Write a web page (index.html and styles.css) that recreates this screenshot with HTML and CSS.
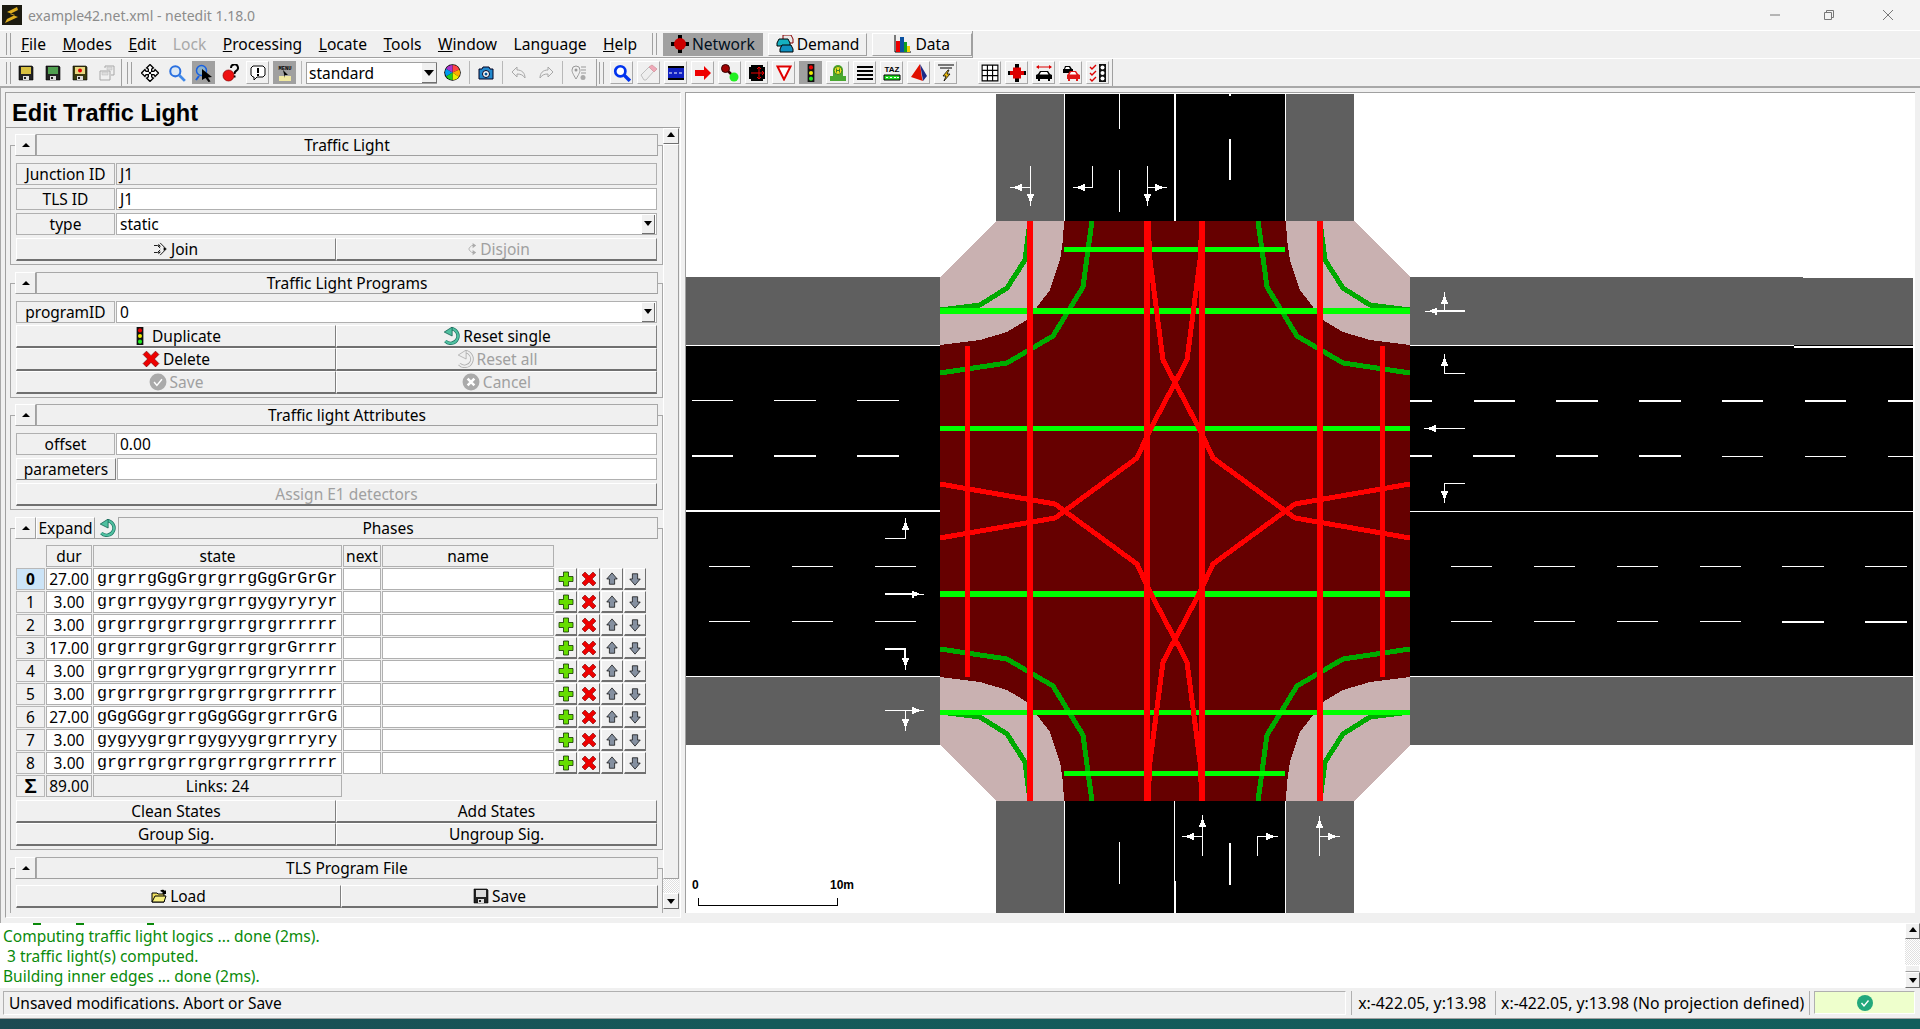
FILE: index.html
```html
<!DOCTYPE html>
<html lang="en">
<head>
<meta charset="utf-8">
<title>example42.net.xml - netedit 1.18.0</title>
<link rel="stylesheet" href="styles.css">
</head>
<body>
<svg class="defs" width="0" height="0">
  <defs>
    <symbol id="floppy" viewBox="0 0 16 16"><path d="M1 1h13l1 1v13H1z" fill="#222" stroke="#000" stroke-width=".6"/><path d="M3 2h10v7H3z" fill="currentColor"/><path d="M5 11h6v4H5z" fill="#ddd"/><path d="M6 12h2v2H6z" fill="#222"/></symbol>
    <symbol id="floppy-red" viewBox="0 0 16 16"><path d="M1 1h13l1 1v13H1z" fill="#3a3a10" stroke="#000" stroke-width=".6"/><path d="M3 2h10v7H3z" fill="#e8d880"/><circle cx="8" cy="5.500" r="2" fill="#e00000"/><path d="M5 11h6v4H5z" fill="#ddd"/><path d="M6 12h2v2H6z" fill="#222"/></symbol>
    <symbol id="floppy-off" viewBox="0 0 16 16"><path d="M6 3V1h9v9h-3M1 6h10v9H1z" fill="none" stroke="#a8a8a8"/><path d="M3 7h6v3H3zM8 2h5v3H8z" fill="#ddd" stroke="#bbb" stroke-width=".5"/></symbol>
    <symbol id="i-cross" viewBox="0 0 16 16"><path d="M8 .5l3 3-1.500 1v2h2l1-1.500 3 3-3 3-1-1.500h-2v2l1.500 1-3 3-3-3 1.500-1v-2h-2l-1 1.500-3-3 3-3 1 1.500h2v-2L5 3.500z" fill="#fff" stroke="#000" stroke-width="1.200"/><path d="M7 7h2v2H7z" fill="#000"/></symbol>
    <symbol id="i-lens" viewBox="0 0 16 16"><circle cx="6.500" cy="6.500" r="4.500" fill="#dce8f4" stroke="#2a70e0" stroke-width="1.800"/><path d="M10 10l5 5" stroke="#4088e8" stroke-width="2.500"/></symbol>
    <symbol id="i-lens-dark" viewBox="0 0 16 16"><circle cx="6.500" cy="6.500" r="4.500" fill="#fff" stroke="#0033ee" stroke-width="2.400"/><path d="M10 10l5 5" stroke="#0033ee" stroke-width="3"/></symbol>
    <symbol id="i-inspect" viewBox="0 0 18 18"><circle cx="6.500" cy="6.500" r="5" fill="#8db0c8" stroke="#1860e0" stroke-width="1.500"/><path d="M1 16l3-4" stroke="#1860e0" stroke-width="2"/><path d="M7 5l10 8-4 .5 2.500 4-2 .5-3-4-3.500 2z" fill="#000"/></symbol>
    <symbol id="i-delete-sel" viewBox="0 0 18 18"><path d="M9 4a3.500 3.500 0 1 1 5 3c-1 .5-1.500 1-1.500 3" fill="none" stroke="#000" stroke-width="2"/><path d="M11.500 11.500h2v2h-2z" fill="#000"/><circle cx="6.500" cy="11.500" r="5.500" fill="#ee1010" stroke="#800" stroke-width=".7"/></symbol>
    <symbol id="i-bubble" viewBox="0 0 16 16"><path d="M3 1h10l2 2v7l-2 2H7l-3 3v-3H3l-2-2V3z" fill="#fff" stroke="#000"/><path d="M7 3h2v5H7zM7 9h2v2H7z" fill="#000"/></symbol>
    <symbol id="i-wheel" viewBox="0 0 16 16"><circle cx="8" cy="8" r="7.800" fill="#000"/><path d="M8 8L8 1A7 7 0 0 1 14.400 5.200z" fill="#f44"/><path d="M8 8L14.400 5.200A7 7 0 0 1 14 12z" fill="#fa0"/><path d="M8 8L14 12A7 7 0 0 1 8 15z" fill="#ee0"/><path d="M8 8L8 15A7 7 0 0 1 2 11.500z" fill="#2c2"/><path d="M8 8L2 11.500A7 7 0 0 1 2 4.500z" fill="#09e"/><path d="M8 8L2 4.500A7 7 0 0 1 8 1z" fill="#a3c"/></symbol>
    <symbol id="i-camera" viewBox="0 0 16 16"><path d="M1 4h3l1-2h6l1 2h3v10H1z" fill="#2288cc" stroke="#002"/><circle cx="8" cy="9" r="3.500" fill="#fff" stroke="#002"/><circle cx="8" cy="9" r="1.500" fill="#059"/></symbol>
    <symbol id="i-undo" viewBox="0 0 16 16"><path d="M1 7l5-5v3c5 0 8 3 8 8-2-3-4-4-8-4v3z" fill="none" stroke="#a8a8a8"/></symbol>
    <symbol id="i-redo" viewBox="0 0 16 16"><path d="M15 7l-5-5v3c-5 0-8 3-8 8 2-3 4-4 8-4v3z" fill="none" stroke="#a8a8a8"/></symbol>
    <symbol id="i-config" viewBox="0 0 16 16"><path d="M5 14C2 9 1 7 1 5a4 4 0 0 1 8 0c0 2-1 4-4 9z" fill="none" stroke="#999"/><circle cx="5" cy="5" r="1.500" fill="#999"/><path d="M10 2h5M10 5h5M10 8h5" stroke="#999"/><circle cx="12" cy="12.500" r="2.500" fill="#aaa"/></symbol>
    <symbol id="i-eraser" viewBox="0 0 18 18"><path d="M1 11l8-8 5 4-8 9H4z" fill="#eee" stroke="#c0c0c0"/><path d="M9 3l3-2 5 4-3 3z" fill="#f0a8b8" stroke="#d8a0a8"/></symbol>
    <symbol id="i-lane" viewBox="0 0 16 16"><path d="M0 1h16v14H0z" fill="#000"/><path d="M0 3h16v10H0z" fill="#1020c0"/><path d="M1 8h3M6 8h3M11 8h3" stroke="#fff"/></symbol>
    <symbol id="i-arrow" viewBox="0 0 16 16"><path d="M0 5h9V1l7 7-7 7v-4H0z" fill="#ee0000"/></symbol>
    <symbol id="i-conn" viewBox="0 0 18 18"><path d="M4 4l9 9" stroke="#300" stroke-width="2.500"/><circle cx="4.500" cy="4.500" r="4" fill="#a00000" stroke="#300"/><circle cx="13" cy="13" r="4.500" fill="#22f022"/></symbol>
    <symbol id="i-crossing" viewBox="0 0 18 18"><path d="M1 1h16v16H1z" fill="#000"/><path d="M3 9h13M11 3v12M11 3l-2 2M11 3l2 2M16 9l-2-2M16 9l-2 2M11 15l-2-2M11 15l2-2" stroke="#ee0000" fill="none"/><path d="M1 1h2v2H1zM15 15h2v2h-2zM1 15h2v2H1zM15 1h2v2h-2z" fill="#eee"/></symbol>
    <symbol id="i-yield" viewBox="0 0 16 16"><path d="M1.500 1.500h13L8 14.500z" fill="#fff" stroke="#e00000" stroke-width="2"/></symbol>
    <symbol id="i-tl" viewBox="0 0 16 16"><path d="M5 0h6v16H5z" fill="#111"/><circle cx="8" cy="3" r="1.800" fill="#e00"/><circle cx="8" cy="8" r="1.800" fill="#ee0"/><circle cx="8" cy="13" r="1.800" fill="#2e2"/></symbol>
    <symbol id="i-stop" viewBox="0 0 18 18"><path d="M1 12h16v5H1z" fill="#49a830"/><path d="M4 12V6a5 5 0 0 1 10 0v6z" fill="#49a830"/><circle cx="9" cy="6.500" r="4" fill="#e8e020" stroke="#3a8020"/><path d="M7.500 4.500v4M10.500 4.500v4M7.500 6.500h3" stroke="#3a8020"/></symbol>
    <symbol id="i-lines" viewBox="0 0 16 16"><path d="M0 1h16v2H0zM0 5h16v2H0zM0 9h16v2H0zM0 13h16v2H0z" fill="#000"/></symbol>
    <symbol id="i-poly" viewBox="0 0 18 18"><path d="M10 0l2 14 1 3L1 13z" fill="#e01000"/><path d="M10 0l7 12-4 5z" fill="#1a2a88"/></symbol>
    <symbol id="i-bolt" viewBox="0 0 18 18"><path d="M1 1h16M3 4h12" stroke="#000"/><path d="M11 6L6 12h3l-2 5 6-7h-3l2-4z" fill="#f0c010" stroke="#000" stroke-width=".8"/></symbol>
    <symbol id="i-grid" viewBox="0 0 16 16"><path d="M1 1h14v14H1zM5.700 1v14M10.300 1v14M1 5.700h14M1 10.300h14" fill="#fff" stroke="#000"/></symbol>
    <symbol id="i-redcross" viewBox="0 0 18 18"><path d="M7 0h4v18H7zM0 7h3v4H0zM15 7h3v4h-3z" fill="#000"/><path d="M2 7h14v4H2z" fill="#dd0000"/><path d="M5 3.500h8v11H5z" fill="#dd0000"/></symbol>
    <symbol id="i-car" viewBox="0 0 18 18"><path d="M2 3h14" stroke="#d00"/><path d="M1 3l3-2v4zM17 3l-3-2v4z" fill="#d00"/><path d="M5 7h8l2 3 2 1v4h-2v2h-2v-2H5v2H3v-2H1v-4l2-1z" fill="#000"/><path d="M6 8h6l1.500 2.500h-9z" fill="#fff"/></symbol>
    <symbol id="i-cars" viewBox="0 0 18 18"><path d="M3 2h5l2 3h1v4H1V5h1z" fill="#000"/><path d="M4 3h3l1 2H3z" fill="#fff"/><path d="M8 7h6l2 3 2 1v4h-2v2h-2v-2H8v2H6v-2H5v-4l1-1z" fill="#e01818"/><path d="M9 8h4l1.500 2.500h-7z" fill="#fff"/></symbol>
    <symbol id="i-checks" viewBox="0 0 18 18"><path d="M1 3l2 2 4-4M1 9l2 2 4-4M1 15l2 2 4-4" fill="none" stroke="#d00" stroke-width="1.400"/><path d="M10 0h7v18h-7z" fill="#111"/><circle cx="13.500" cy="3.500" r="2" fill="#fff"/><circle cx="13.500" cy="9" r="2" fill="#fff"/><circle cx="13.500" cy="14.500" r="2" fill="#fff"/></symbol>
    <symbol id="i-net" viewBox="0 0 18 18"><path d="M7 0h4v18H7zM0 7h18v4H0z" fill="#000"/><circle cx="9" cy="9" r="6" fill="#cc0000"/></symbol>
    <symbol id="i-dem" viewBox="0 0 18 18"><path d="M7 0h8l2 4v4H7z" fill="#e8e8e8" stroke="#800"/><path d="M3 4h9l2 4v3H1V8z" fill="#15b0c0" stroke="#000"/><path d="M6 10h9l2 4v3H4v-3z" fill="#1090c0" stroke="#000"/></symbol>
    <symbol id="i-data" viewBox="0 0 18 18"><path d="M1 0v17h16" fill="none" stroke="#000"/><path d="M2 6h4v11H2z" fill="#ee0000"/><path d="M6 2h4v15H6z" fill="#0a50a0"/><path d="M10 7h3v10h-3z" fill="#10a020"/><path d="M13 11h3v6h-3z" fill="#f0d000"/></symbol>
    <symbol id="i-join" viewBox="0 0 16 16"><path d="M0 4h4l3 3M0 12h4l3-3M7 1l7 7-7 7" fill="none" stroke="#000"/><path d="M5 2l3 3H5zM5 11h3l-3 3zM11 6l3 2-3 2z" fill="#000"/></symbol>
    <symbol id="i-disjoin" viewBox="0 0 16 16"><path d="M14 4h-4l-3 3v2l3 3h4" fill="none" stroke="#aaa"/><path d="M11 1l4 3-4 3zM11 9l4 3-4 3z" fill="#aaa"/></symbol>
    <symbol id="i-reset" viewBox="0 0 16 16"><path d="M8 1.500a6.500 6.500 0 1 1-5 11" fill="none" stroke="#1a7060" stroke-width="3"/><path d="M8 1.500a6.500 6.500 0 1 1-5 11" fill="none" stroke="#50c0a0" stroke-width="1.800"/><path d="M9 0L2 4.500 9 8z" fill="#50c0a0" stroke="#106050" stroke-width=".7"/></symbol>
    <symbol id="i-reset-off" viewBox="0 0 16 16"><path d="M8 1.500a6.500 6.500 0 1 1-5 11" fill="none" stroke="#aaa" stroke-width="3"/><path d="M8 1.500a6.500 6.500 0 1 1-5 11" fill="none" stroke="#eee" stroke-width="1.600"/><path d="M9 0L2 4.500 9 8z" fill="#eee" stroke="#aaa" stroke-width=".7"/></symbol>
    <symbol id="i-x" viewBox="0 0 16 16"><path d="M1 4l3-3 4 4 4-4 3 3-4 4 4 4-3 3-4-4-4 4-3-3 4-4z" fill="#ee0000" stroke="#700" stroke-width=".6"/></symbol>
    <symbol id="i-ok-off" viewBox="0 0 16 16"><circle cx="8" cy="8" r="7.500" fill="#aaa"/><path d="M4.500 8l2.500 3 4.500-5.500" fill="none" stroke="#fff" stroke-width="1.300"/></symbol>
    <symbol id="i-no-off" viewBox="0 0 16 16"><circle cx="8" cy="8" r="7.500" fill="#aaa"/><path d="M5 5l6 6M11 5l-6 6" stroke="#fff" stroke-width="2.200"/></symbol>
    <symbol id="i-folder" viewBox="0 0 16 16"><path d="M1 5h5l1 1h6v8H1z" fill="#f0e060" stroke="#000"/><path d="M1 14l3-6h11l-2 6z" fill="#f8f080" stroke="#000"/><path d="M9 3c2-2 4-1 5 0l1-1v4h-4l1-1c-1-1-2-2-3-2z" fill="#000"/></symbol>
    <symbol id="i-plus" viewBox="0 0 16 16"><path d="M5.500 1h5v4.500H15v5h-4.500V15h-5v-4.500H1v-5h4.500z" fill="#66dd00" stroke="#113300" stroke-width=".8"/></symbol>
    <symbol id="i-up" viewBox="0 0 16 16"><path d="M8 1l6 7h-3v6H5V8H2z" fill="#8590a0" stroke="#000" stroke-width=".8"/></symbol>
    <symbol id="i-down" viewBox="0 0 16 16"><path d="M8 15l6-7h-3V2H5v6H2z" fill="#8590a0" stroke="#000" stroke-width=".8"/></symbol>
    <symbol id="i-ok" viewBox="0 0 16 16"><circle cx="8" cy="8" r="8" fill="#22a87c"/><path d="M4.500 8l2.500 3 4.500-5.500" fill="none" stroke="#fff" stroke-width="1.400"/></symbol>
  </defs>
</svg>

<div class="window">
  <header class="titlebar">
    <svg class="app-logo" viewBox="0 0 20 20"><path d="M0 0h20v20H0z" fill="#1c1a10"/><path d="M15 2L5 7l8 3-8 4-2 4 13-6-8-3 8-4z" fill="#e0b020"/></svg>
    <span class="app-title">example42.net.xml - netedit 1.18.0</span>
    <div class="winbtns">
      <svg class="winbtn" viewBox="0 0 12 12"><path d="M1 6h10" stroke="#777"/></svg>
      <svg class="winbtn" viewBox="0 0 12 12"><path d="M1.500 3.500h7v7h-7zM3.500 3.500v-2h7v7h-2" fill="none" stroke="#777"/></svg>
      <svg class="winbtn win-close" viewBox="0 0 12 12"><path d="M1 1l10 10M11 1L1 11" stroke="#777"/></svg>
    </div>
  </header>

  <div class="menurow">
    <nav class="menubar">
      <span class="grip"></span>
      <span class="menu first"><u>F</u>ile</span>
      <span class="menu"><u>M</u>odes</span>
      <span class="menu"><u>E</u>dit</span>
      <span class="menu off">Lock</span>
      <span class="menu"><u>P</u>rocessing</span>
      <span class="menu"><u>L</u>ocate</span>
      <span class="menu"><u>T</u>ools</span>
      <span class="menu"><u>W</u>indow</span>
      <span class="menu">Language</span>
      <span class="menu"><u>H</u>elp</span>
    </nav>
    <div class="modebar">
      <span class="grip"></span>
      <span class="modebtn pressed"><svg class="ico18"><use href="#i-net"/></svg>Network</span>
      <span class="modebtn"><svg class="ico18"><use href="#i-dem"/></svg>Demand</span>
      <span class="modebtn"><svg class="ico18"><use href="#i-data"/></svg>Data</span>
    </div>
  </div>

  <div class="toolrow">
    <div class="tools tools-file">
      <span class="grip"></span>
      <span class="tb flat"><svg class="ico16 c-yellow"><use href="#floppy"/></svg></span>
      <span class="tb flat"><svg class="ico16 c-green"><use href="#floppy"/></svg></span>
      <span class="tb flat"><svg class="ico16"><use href="#floppy-red"/></svg></span>
      <span class="tb flat"><svg class="ico16"><use href="#floppy-off"/></svg></span>
    </div>
    <div class="tools tools-view">
      <span class="grip"></span>
      <span class="tb flat"><svg class="ico18"><use href="#i-cross"/></svg></span>
      <span class="tb flat"><svg class="ico18"><use href="#i-lens"/></svg></span>
      <span class="tb pressed"><svg class="ico18"><use href="#i-inspect"/></svg></span>
      <span class="tb flat"><svg class="ico18"><use href="#i-delete-sel"/></svg></span>
      <span class="tb"><svg class="ico16"><use href="#i-bubble"/></svg></span>
      <span class="tb pressed"><svg class="ico18" viewBox="0 0 18 18"><text class="menu-ico" x="9" y="6" text-anchor="middle">MENU</text><path d="M3 12h12v5H3z" fill="#f0e8a0"/><path d="M7 6l5 5H9v3z" fill="#000"/></svg></span>
      <span class="sep"></span>
      <div class="combo"><span class="combo-text">standard</span><span class="combo-arrow"></span></div>
      <span class="tb flat"><svg class="ico17"><use href="#i-wheel"/></svg></span>
      <span class="sep"></span>
      <span class="tb flat"><svg class="ico16"><use href="#i-camera"/></svg></span>
      <span class="sep"></span>
      <span class="tb flat"><svg class="ico16"><use href="#i-undo"/></svg></span>
      <span class="tb flat"><svg class="ico16"><use href="#i-redo"/></svg></span>
      <span class="sep"></span>
      <span class="tb flat"><svg class="ico16"><use href="#i-config"/></svg></span>
    </div>
    <div class="tools tools-edit">
      <span class="grip"></span>
      <span class="tb"><svg class="ico18"><use href="#i-lens-dark"/></svg></span>
      <span class="tb"><svg class="ico18"><use href="#i-eraser"/></svg></span>
      <span class="tb"><svg class="ico16"><use href="#i-lane"/></svg></span>
      <span class="tb"><svg class="ico16"><use href="#i-arrow"/></svg></span>
      <span class="tb"><svg class="ico18"><use href="#i-conn"/></svg></span>
      <span class="tb"><svg class="ico18"><use href="#i-crossing"/></svg></span>
      <span class="tb"><svg class="ico16"><use href="#i-yield"/></svg></span>
      <span class="tb pressed"><svg class="ico18"><use href="#i-tl"/></svg></span>
      <span class="tb"><svg class="ico18"><use href="#i-stop"/></svg></span>
      <span class="tb"><svg class="ico16"><use href="#i-lines"/></svg></span>
      <span class="tb"><svg class="ico18" viewBox="0 0 18 18"><text class="taz-ico" x="9" y="8" text-anchor="middle">TAZ</text><path d="M1 11h16v5H1z" fill="#22dd22" stroke="#000"/><path d="M3 13.500h2M7 13.500h2M11 13.500h2M14 13.500h2" stroke="#fff"/></svg></span>
      <span class="tb"><svg class="ico18"><use href="#i-poly"/></svg></span>
      <span class="tb"><svg class="ico18"><use href="#i-bolt"/></svg></span>
      <span class="tb wide-gap"><svg class="ico18"><use href="#i-grid"/></svg></span>
      <span class="tb"><svg class="ico18"><use href="#i-redcross"/></svg></span>
      <span class="tb"><svg class="ico18"><use href="#i-car"/></svg></span>
      <span class="tb"><svg class="ico18"><use href="#i-cars"/></svg></span>
      <span class="tb"><svg class="ico18"><use href="#i-checks"/></svg></span>
    </div>
  </div>

  <main class="main">
    <aside class="panel">
      <div class="panel-inner">
        <h1 class="panel-title">Edit Traffic Light</h1>
        <div class="panel-body">
          <div class="panel-scroll">

            <section class="group g1">
              <div class="ghead"><span class="collapse"></span><span class="gtitle">Traffic Light</span></div>
              <div class="row"><span class="lbl">Junction ID</span><span class="fld dis">J1</span></div>
              <div class="row"><span class="lbl">TLS ID</span><span class="fld">J1</span></div>
              <div class="row"><span class="lbl">type</span><span class="fld">static<span class="combo-arrow small"></span></span></div>
              <div class="btns">
                <span class="btn"><svg class="ico14"><use href="#i-join"/></svg>Join</span>
                <span class="btn off"><svg class="ico14"><use href="#i-disjoin"/></svg>Disjoin</span>
              </div>
            </section>

            <section class="group g2">
              <div class="ghead"><span class="collapse"></span><span class="gtitle">Traffic Light Programs</span></div>
              <div class="row tight"><span class="lbl">programID</span><span class="fld">0<span class="combo-arrow small"></span></span></div>
              <div class="btns">
                <span class="btn"><svg class="ico18"><use href="#i-tl"/></svg>Duplicate</span>
                <span class="btn"><svg class="ico18"><use href="#i-reset"/></svg>Reset single</span>
                <span class="btn"><svg class="ico18"><use href="#i-x"/></svg>Delete</span>
                <span class="btn off"><svg class="ico18"><use href="#i-reset-off"/></svg>Reset all</span>
                <span class="btn off"><svg class="ico18"><use href="#i-ok-off"/></svg>Save</span>
                <span class="btn off"><svg class="ico18"><use href="#i-no-off"/></svg>Cancel</span>
              </div>
            </section>

            <section class="group g3">
              <div class="ghead"><span class="collapse"></span><span class="gtitle">Traffic light Attributes</span></div>
              <div class="row"><span class="lbl">offset</span><span class="fld">0.00</span></div>
              <div class="row"><span class="lbl btnlike">parameters</span><span class="fld"></span></div>
              <div class="btns one"><span class="btn off assign">Assign E1 detectors</span></div>
            </section>

            <section class="group g4">
              <div class="ghead">
                <span class="collapse"></span>
                <span class="gmini">Expand</span>
                <span class="gicon"><svg class="ico18"><use href="#i-reset"/></svg></span>
                <span class="gtitle">Phases</span>
              </div>
              <div class="phases">
                <span></span><span class="th">dur</span><span class="th">state</span><span class="th">next</span><span class="th">name</span><span class="span4"></span>

                <span class="idx cur">0</span><span class="cell num">27.00</span><span class="cell st">grgrrgGgGrgrgrrgGgGrGrGr</span><span class="cell"></span><span class="cell"></span><span class="act"><svg class="ico16"><use href="#i-plus"/></svg></span><span class="act"><svg class="ico16"><use href="#i-x"/></svg></span><span class="act"><svg class="ico14"><use href="#i-up"/></svg></span><span class="act"><svg class="ico14"><use href="#i-down"/></svg></span>

                <span class="idx">1</span><span class="cell num">3.00</span><span class="cell st">grgrrgygyrgrgrrgygyryryr</span><span class="cell"></span><span class="cell"></span><span class="act"><svg class="ico16"><use href="#i-plus"/></svg></span><span class="act"><svg class="ico16"><use href="#i-x"/></svg></span><span class="act"><svg class="ico14"><use href="#i-up"/></svg></span><span class="act"><svg class="ico14"><use href="#i-down"/></svg></span>

                <span class="idx">2</span><span class="cell num">3.00</span><span class="cell st">grgrrgrgrrgrgrrgrgrrrrrr</span><span class="cell"></span><span class="cell"></span><span class="act"><svg class="ico16"><use href="#i-plus"/></svg></span><span class="act"><svg class="ico16"><use href="#i-x"/></svg></span><span class="act"><svg class="ico14"><use href="#i-up"/></svg></span><span class="act"><svg class="ico14"><use href="#i-down"/></svg></span>

                <span class="idx">3</span><span class="cell num">17.00</span><span class="cell st">grgrrgrgrGgrgrrgrgrGrrrr</span><span class="cell"></span><span class="cell"></span><span class="act"><svg class="ico16"><use href="#i-plus"/></svg></span><span class="act"><svg class="ico16"><use href="#i-x"/></svg></span><span class="act"><svg class="ico14"><use href="#i-up"/></svg></span><span class="act"><svg class="ico14"><use href="#i-down"/></svg></span>

                <span class="idx">4</span><span class="cell num">3.00</span><span class="cell st">grgrrgrgrygrgrrgrgryrrrr</span><span class="cell"></span><span class="cell"></span><span class="act"><svg class="ico16"><use href="#i-plus"/></svg></span><span class="act"><svg class="ico16"><use href="#i-x"/></svg></span><span class="act"><svg class="ico14"><use href="#i-up"/></svg></span><span class="act"><svg class="ico14"><use href="#i-down"/></svg></span>

                <span class="idx">5</span><span class="cell num">3.00</span><span class="cell st">grgrrgrgrrgrgrrgrgrrrrrr</span><span class="cell"></span><span class="cell"></span><span class="act"><svg class="ico16"><use href="#i-plus"/></svg></span><span class="act"><svg class="ico16"><use href="#i-x"/></svg></span><span class="act"><svg class="ico14"><use href="#i-up"/></svg></span><span class="act"><svg class="ico14"><use href="#i-down"/></svg></span>

                <span class="idx">6</span><span class="cell num">27.00</span><span class="cell st">gGgGGgrgrrgGgGGgrgrrrGrG</span><span class="cell"></span><span class="cell"></span><span class="act"><svg class="ico16"><use href="#i-plus"/></svg></span><span class="act"><svg class="ico16"><use href="#i-x"/></svg></span><span class="act"><svg class="ico14"><use href="#i-up"/></svg></span><span class="act"><svg class="ico14"><use href="#i-down"/></svg></span>

                <span class="idx">7</span><span class="cell num">3.00</span><span class="cell st">gygyygrgrrgygyygrgrrryry</span><span class="cell"></span><span class="cell"></span><span class="act"><svg class="ico16"><use href="#i-plus"/></svg></span><span class="act"><svg class="ico16"><use href="#i-x"/></svg></span><span class="act"><svg class="ico14"><use href="#i-up"/></svg></span><span class="act"><svg class="ico14"><use href="#i-down"/></svg></span>

                <span class="idx">8</span><span class="cell num">3.00</span><span class="cell st">grgrrgrgrrgrgrrgrgrrrrrr</span><span class="cell"></span><span class="cell"></span><span class="act"><svg class="ico16"><use href="#i-plus"/></svg></span><span class="act"><svg class="ico16"><use href="#i-x"/></svg></span><span class="act"><svg class="ico14"><use href="#i-up"/></svg></span><span class="act"><svg class="ico14"><use href="#i-down"/></svg></span>

                <span class="idx sigma">Σ</span><span class="th">89.00</span><span class="th">Links: 24</span>
              </div>
              <div class="btns">
                <span class="btn">Clean States</span>
                <span class="btn">Add States</span>
                <span class="btn">Group Sig.</span>
                <span class="btn">Ungroup Sig.</span>
              </div>
            </section>

            <section class="group g5">
              <div class="ghead"><span class="collapse"></span><span class="gtitle">TLS Program File</span></div>
              <div class="btns file">
                <span class="btn"><svg class="ico16"><use href="#i-folder"/></svg>Load</span>
                <span class="btn"><svg class="ico16 c-dark"><use href="#floppy"/></svg>Save</span>
              </div>
            </section>
          </div>
          <div class="scrollbar">
            <span class="sb-btn sb-up"></span>
            <span class="sb-thumb"></span>
            <span class="sb-track"></span>
            <span class="sb-btn sb-down"></span>
          </div>
        </div>
      </div>
    </aside>

    <div class="canvas">
      <svg class="net" viewBox="686 94 1227 819" width="1227" height="819" shape-rendering="crispEdges">
        <defs>
          <path id="hd" d="M-.5 0V-5H-1L-2.500 -10H-3.500V-12H3.500V-10H2.500L1 -5H.5V0z" fill="#fff"/>
          <g id="curves" fill="none" stroke="#00aa00" stroke-width="5">
            <path d="M1030 221L1025 260L1007 288L980 305L940 310"/>
            <path d="M1092 221L1088 250L1083 287L1053 336L1007 363L940 373"/>
          </g>
        </defs>
        <!-- roads -->
        <path d="M686 277H940V345H686zM686 676H940V745H686zM1410 277H1913V345H1410zM1410 677H1913V745H1410zM996 94H1064V221H996zM1286 94H1354V221H1286zM996 801H1064V913H996zM1286 801H1354V913H1286z" fill="#5f5f5f"/>
        <path d="M686 345H940V676H686zM1410 345H1913V676H1410zM1064 94H1286V221H1064zM1064 801H1286V913H1064z" fill="#000"/>
        <path d="M1803 277h110v1h-110z" fill="#fff"/>
        <!-- road edges -->
        <g stroke="#fff" fill="none" stroke-width="1">
          <path d="M686 345.500H940M686 676.500H940M1410 345.500H1794M1410 511.500H1913M1410 676.500H1913"/>
          <path d="M1064.500 94V221M1285.500 94V221M1064.500 801V913M1285.500 801V913M1174.500 801V881"/>
          <path d="M1119.500 94V129M1119.500 170V212M1119.500 842V884"/>
          <path d="M692 400.500H733M774 400.500H816M857 400.500H899"/>
          <path d="M709 566.500H750M792 566.500H833M875 566.500H916M709 621.500H750M792 621.500H833M875 621.500H916"/>
          <path d="M1722 456.500H1763M1805 456.500H1846M1888 456.500H1913"/>
          <path d="M1451 566.500H1492M1534 566.500H1575M1617 566.500H1658M1700 566.500H1741M1782 566.500H1824M1865 566.500H1907"/>
          <path d="M1451 621.500H1492M1534 621.500H1575M1617 621.500H1658M1700 621.500H1741"/>
          <!-- thin arrows -->
          <path d="M1030.500 166V200M1030 187.500H1014M1092.500 166V187.500H1078M1147.500 166V200M1147 187.500H1162"/>
          <path d="M1202.500 856V822M1202 836.500H1187M1257.500 856V836.500H1272M1319.500 856V822M1319 836.500H1334"/>
          <path d="M885 538.500H905.500V525M905.500 710V726M885 710.500H920"/>
          <path d="M1465 373.500H1444.500V360M1465 428.500H1430M1465 483.500H1444.500V497M1444.500 311V298"/>
        </g>
        <g stroke="#fff" fill="none" stroke-width="2">
          <path d="M686 511H940M1794 347H1913M1175 94V221M1175 881V913"/>
          <path d="M1230 94V96M1230 139V180M1230 843V885"/>
          <path d="M692 456H733M774 456H816M857 456H899"/>
          <path d="M1410 401H1432M1474 401H1515M1556 401H1598M1639 401H1681M1722 401H1763M1805 401H1846M1888 401H1913"/>
          <path d="M1410 456H1432M1473 456H1515M1556 456H1598M1639 456H1681"/>
          <path d="M1782 622H1824M1865 622H1907"/>
          <path d="M885 594H918M885 649H905V664M1465 311H1430"/>
        </g>
        <use href="#hd" transform="translate(1030.500 206)"/>
        <use href="#hd" transform="translate(1010 187.500) rotate(90)"/>
        <use href="#hd" transform="translate(1073 187.500) rotate(90)"/>
        <use href="#hd" transform="translate(1147.500 206)"/>
        <use href="#hd" transform="translate(1167 187.500) rotate(-90)"/>
        <use href="#hd" transform="translate(1202.500 815) rotate(180)"/>
        <use href="#hd" transform="translate(1182 836.500) rotate(90)"/>
        <use href="#hd" transform="translate(1278 836.500) rotate(-90)"/>
        <use href="#hd" transform="translate(1319.500 816) rotate(180)"/>
        <use href="#hd" transform="translate(1340 836.500) rotate(-90)"/>
        <use href="#hd" transform="translate(905.500 518) rotate(180)"/>
        <use href="#hd" transform="translate(924 594) rotate(-90)"/>
        <use href="#hd" transform="translate(905.500 670)"/>
        <use href="#hd" transform="translate(924 710.500) rotate(-90)"/>
        <use href="#hd" transform="translate(905.500 731)"/>
        <use href="#hd" transform="translate(1444.500 292) rotate(180)"/>
        <use href="#hd" transform="translate(1425 311) rotate(90)"/>
        <use href="#hd" transform="translate(1444.500 354) rotate(180)"/>
        <use href="#hd" transform="translate(1424 428.500) rotate(90)"/>
        <use href="#hd" transform="translate(1444.500 503)"/>
        <!-- junction -->
        <path d="M996 221H1354L1410 277V745L1354 801H996L940 745V277z" fill="#c9b1b1"/>
        <path d="M1064 221H1286L1287 240L1290 260L1300 290L1323 320L1343 332L1370 340L1410 345V677L1370 682L1343 690L1323 702L1300 732L1290 762L1287 782L1286 801H1064L1063 782L1060 762L1050 732L1027 702L1007 690L980 682L940 677V345L980 340L1007 332L1027 320L1050 290L1060 260L1063 240z" fill="#660000"/>
        <!-- links: yielding -->
        <use href="#curves"/>
        <use href="#curves" transform="translate(2350 0) scale(-1 1)"/>
        <use href="#curves" transform="translate(0 1022) scale(1 -1)"/>
        <use href="#curves" transform="translate(2350 1022) scale(-1 -1)"/>
        <!-- links: green -->
        <g stroke="#00ff00" fill="none">
          <path d="M1064 249H1285M940 428H1410M940 712H1410M1064 773H1285" stroke-width="5"/>
          <path d="M940 311H1410M940 594H1410" stroke-width="6"/>
        </g>
        <!-- links: red -->
        <g stroke="#ff0000" fill="none" stroke-width="6">
          <path d="M1030 221V801M1147 221V801M1202 221V801M1320 221V801"/>
          <path d="M967 346V677M1382 346V677" stroke-width="5"/>
          <path d="M1202 221L1200 260L1187 360L1150 430L1137 458L1055 518L940 538" stroke-width="5"/>
          <path d="M1148 221L1150 260L1163 360L1200 430L1213 458L1295 518L1410 538" stroke-width="5"/>
          <path d="M1202 801L1200 762L1187 662L1150 592L1137 564L1055 504L940 484" stroke-width="5"/>
          <path d="M1148 801L1150 762L1163 662L1200 592L1213 564L1295 504L1410 484" stroke-width="5"/>
        </g>
        <!-- scale -->
        <g stroke="#000" fill="none">
          <path d="M698.500 898V905.500H837.500V898"/>
        </g>
        <text class="scale-t" x="692" y="889">0</text>
        <text class="scale-t" x="830" y="889">10m</text>
      </svg>
    </div>
  </main>

  <div class="messages">
    <div class="msg-text">
      <div class="msg-cut"><span class="tick t1"></span><span class="tick t2"></span><span class="tick t3"></span></div>
      <div class="msg">Computing traffic light logics ... done (2ms).</div>
      <div class="msg">&nbsp;3 traffic light(s) computed.</div>
      <div class="msg">Building inner edges ... done (2ms).</div>
    </div>
    <div class="scrollbar msg-sb">
      <span class="sb-btn sb-up"></span>
      <span class="sb-track"></span>
      <span class="sb-thumb-mini"></span>
      <span class="sb-btn sb-down"></span>
    </div>
  </div>

  <footer class="statusbar">
    <span class="st-main">Unsaved modifications. Abort or Save</span>
    <span class="st-sep"></span>
    <span class="st-c1">x:-422.05, y:13.98</span>
    <span class="st-sep"></span>
    <span class="st-c2">x:-422.05, y:13.98 (No projection defined)</span>
    <span class="st-sep"></span>
    <span class="st-ok"><svg class="ico16"><use href="#i-ok"/></svg></span>
  </footer>
  <div class="desktop"></div>
</div>
</body>
</html>
```

FILE: styles.css
```css
* { box-sizing: border-box; }
html, body { margin: 0; padding: 0; height: 100%; overflow: hidden; }
body { font-family: "Noto Sans", "Liberation Sans", sans-serif; font-size: 15.500px; color: #000; background: #f0f0f0; }
.defs { position: absolute; }
.window { display: flex; flex-direction: column; width: 1920px; height: 1029px; }
svg { display: block; flex: none; }
.ico14 { width: 14px; height: 14px; }
.ico16 { width: 16px; height: 16px; }
.ico17 { width: 17px; height: 17px; }
.ico18 { width: 18px; height: 18px; }
.c-yellow { color: #d8c040; }
.c-green { color: #50a050; }
.c-dark { color: #dadada; }
.menu-ico { font: bold 5.500px "Liberation Mono", monospace; fill: #000; }
.taz-ico { font: bold 8px "Liberation Sans", sans-serif; fill: #000; }

.titlebar { height: 30px; flex: none; display: flex; align-items: center; background: #f3f3f3; padding-left: 2px; }
.app-logo { width: 20px; height: 20px; }
.app-title { margin-left: 6px; font-size: 14px; color: #8c8c8c; }
.winbtns { margin-left: auto; display: flex; gap: 42px; padding-right: 26px; }
.winbtn { width: 12px; height: 12px; }
.win-close { margin-left: 5px; }

.menurow { height: 28px; flex: none; display: flex; border-top: 1px solid #fff; }
.menubar { width: 650px; display: flex; align-items: center; border-bottom: 1px solid #a0a0a0; padding-left: 6px; }
.grip { width: 5px; height: 22px; flex: none; border-left: 1px solid #a0a0a0; border-right: 1px solid #a0a0a0; }
.menu { margin-left: 16.500px; font-size: 15.600px; }
.menu.first { margin-left: 10px; }
.menu.off { color: #a8a8a8; }
.modebar { width: 323px; display: flex; align-items: center; padding-left: 2px; border-right: 1px solid #a0a0a0; border-bottom: 1px solid #a0a0a0; gap: 5px; }
.modebar .grip { margin-right: 1px; }
.modebtn { width: 100px; height: 23px; display: flex; align-items: center; justify-content: center; gap: 3px; border: 1px solid #fff; border-right-color: #a0a0a0; border-bottom-color: #a0a0a0; font-size: 15.600px; }
.modebtn.pressed { background: #a0a0a0; border-color: #a0a0a0; color: #001020; }

.toolrow { height: 30px; flex: none; display: flex; align-items: center; border-top: 1px solid #fff; border-bottom: 2px solid #a8a8a8; }
.tools { display: flex; align-items: center; height: 100%; gap: 4px; border-right: 1px solid #a0a0a0; }
.tools-file { width: 122px; padding-left: 6px; }
.tools-view { width: 475px; padding-left: 5px; }
.tools-edit { width: 516px; padding-left: 2px; }
.tools .grip { margin-right: 2px; }
.tools-file .grip { margin-right: -1px; }
.tb { width: 23px; height: 23px; flex: none; display: flex; align-items: center; justify-content: center; border: 1px solid #fff; border-right-color: #a8a8a8; border-bottom-color: #a8a8a8; }
.tb.flat { border-color: transparent; }
.tb.pressed { background: #a0a0a0; border-color: #a0a0a0; }
.tb.wide-gap { margin-left: 17px; }
.sep { width: 1px; height: 23px; background: #b8b8b8; margin: 0 .5px; flex: none; }
.combo { width: 131px; height: 22px; flex: none; background: #fff; border: 1px solid #a0a0a0; border-right: 0; display: flex; align-items: center; padding-left: 2px; font-size: 15.500px; }
.combo-text { flex: 1; }
.combo-arrow { width: 15px; height: 20px; flex: none; position: relative; background: #f0f0f0; border-right: 1px solid #707070; border-bottom: 1px solid #707070; }
.combo-arrow::after { content: ""; position: absolute; left: 2px; top: 7px; border: 5px solid transparent; border-top: 6px solid #000; border-bottom: 0; }
.combo-arrow.small { position: absolute; right: 1px; top: 1px; width: 13px; height: 19px; }
.combo-arrow.small::after { left: 2px; top: 6px; border-width: 4px; border-top-width: 5px; border-bottom: 0; }

.main { height: 835px; flex: none; display: flex; }
.panel { width: 685px; flex: none; padding: 4px 0 0 0; border-left: 1px solid #a8a8a8; }
.panel-inner { margin-left: 4px; width: 676px; height: 826px; border-left: 1px solid #a0a0a0; border-top: 1px solid #a0a0a0; border-right: 1px solid #fff; border-bottom: 1px solid #fff; display: flex; flex-direction: column; overflow: hidden; }
.panel-title { margin: 0; height: 35px; flex: none; padding-left: 6px; font: bold 23.600px/41px "Liberation Sans", sans-serif; border-bottom: 1px solid #a0a0a0; overflow: hidden; }
.panel-body { flex: 1; display: flex; min-height: 0; padding-bottom: 4px; }
.panel-scroll { width: 657px; flex: none; height: 100%; overflow: hidden; padding-left: 4px; }
.scrollbar { width: 16px; flex: none; display: flex; flex-direction: column; }
.panel-body .scrollbar { margin-bottom: 4px; }
.sb-btn { height: 16px; flex: none; position: relative; border: 1px solid #fff; border-right-color: #707070; border-bottom-color: #707070; }
.sb-btn::after { content: ""; position: absolute; left: 3px; border: 4px solid transparent; }
.sb-up::after { top: 3px; border-bottom: 5px solid #000; border-top: 0; }
.sb-down::after { top: 5px; border-top: 5px solid #000; border-bottom: 0; }
.sb-thumb { flex: 1; border: 1px solid #fff; border-right-color: #a0a0a0; border-bottom-color: #a0a0a0; }
.sb-track { height: 14px; flex: none; background: repeating-conic-gradient(#fff 0 25%, #e0e0e0 0 50%) 0 0 / 2px 2px; }

.group { width: 653px; margin-top: 18px; border: 1px solid #a8a8a8; padding: 0 5px 3px; }
.g1 { margin-top: 17px; }
.g3 { margin-top: 17px; }
.g5 { padding-bottom: 40px; }
.ghead { height: 22px; margin: -12px -1px 7px; display: flex; background: #f0f0f0; }
.collapse { width: 21px; flex: none; position: relative; border: 1px solid #fff; border-right-color: #a0a0a0; border-bottom-color: #a0a0a0; }
.collapse::after { content: ""; position: absolute; left: 6px; top: 8px; border: 4px solid transparent; border-bottom: 4px solid #000; border-top: 0; }
.gtitle { flex: 1; text-align: center; line-height: 20px; border: 1px solid #a8a8a8; border-bottom-color: #a0a0a0; }
.gmini { width: 59px; flex: none; text-align: center; line-height: 20px; border: 1px solid #fff; border-right-color: #a0a0a0; border-bottom-color: #a0a0a0; }
.gicon { width: 23px; flex: none; display: flex; align-items: center; justify-content: center; border-bottom: 1px solid #a0a0a0; }

.row { display: flex; height: 22px; gap: 1px; margin-bottom: 3px; }
.row.tight { margin-bottom: 2px; }
.lbl { width: 99px; flex: none; text-align: center; line-height: 20px; border: 1px solid #b0b0b0; white-space: nowrap; }
.lbl.btnlike { width: 100px; border-color: #fff #808080 #808080 #fff; }
.fld { flex: 1; position: relative; background: #fff; border: 1px solid #b0b0b0; padding-left: 3px; line-height: 20px; }
.fld.dis { background: #f0f0f0; }

.btns { display: grid; grid-template-columns: 320px 321px; }
.btns.one { grid-template-columns: 641px; }
.btns.file { grid-template-columns: 325px 317px; margin-top: -1px; }
.btn { height: 23px; display: flex; align-items: center; justify-content: center; gap: 3px; border: 1px solid #fff; border-right: 1px solid #808080; border-bottom: 2px solid #707070; }
.btn.off { color: #a0a0a0; }
.btn.assign { padding-left: 20px; }

.phases { display: grid; grid-template-columns: 29px 46px 249px 38px 172px 22px 22px 22px 22px; column-gap: 1px; grid-auto-rows: 22px; row-gap: 1px; margin-bottom: 3px; margin-top: -1px; }
.span4 { grid-column: span 4; }
.th { border: 1px solid #b0b0b0; text-align: center; line-height: 20px; }
.idx { text-align: center; line-height: 20px; border: 1px solid #b8b8b8; background: #f0f0f0; }
.idx.cur { background: #cce4f7; font-weight: 700; }
.idx.sigma { font: bold 21px/19px "Liberation Sans", sans-serif; }
.cell { background: #fff; border: 1px solid #b0b0b0; line-height: 20px; }
.cell.num { text-align: center; }
.cell.st { font: 16.700px/20px "Liberation Mono", monospace; padding-left: 3px; white-space: nowrap; overflow: hidden; }
.act { display: flex; align-items: center; justify-content: center; border: 1px solid #fff; border-right: 1px solid #707070; border-bottom: 2px solid #707070; }

.canvas { flex: 1; margin: 4px 5px 10px 0; border-left: 1px solid #a0a0a0; border-top: 1px solid #a0a0a0; background: #fff; padding: 1px 0 0 0; overflow: hidden; }
.scale-t { font: bold 12px "Liberation Sans", sans-serif; fill: #000; }

.messages { height: 65px; flex: none; display: flex; background: #fff; }
.msg-text { flex: 1; overflow: hidden; padding-left: 3px; color: #0a8a0a; }
.msg-cut { height: 3px; display: flex; }
.tick { height: 2px; background: #0a8a0a; }
.t1 { width: 8px; margin-left: 30px; }
.t2 { width: 8px; margin-left: 35px; }
.t3 { width: 7px; margin-left: 63px; }
.msg { height: 20px; line-height: 20px; white-space: nowrap; }
.msg-sb { width: 15px; background: #f0f0f0; }
.msg-sb .sb-track { flex: 1; }
.sb-thumb-mini { height: 7px; flex: none; border: 1px solid #fff; border-bottom-color: #a0a0a0; }

.statusbar { height: 31px; flex: none; display: flex; align-items: flex-start; padding: 3px 5px 0 3px; border-bottom: 1px solid #a0a0a0; }
.st-main { width: 1344px; height: 24px; padding-left: 5px; line-height: 23px; border: 1px solid #b0b0b0; border-right-color: #fff; border-bottom-color: #fff; }
.st-sep { width: 1px; height: 24px; background: #b0b0b0; margin-left: 5px; flex: none; }
.st-c1 { width: 138px; padding-left: 6px; line-height: 24px; white-space: nowrap; font-size: 15.800px; }
.st-c2 { width: 308px; padding-left: 5px; line-height: 24px; white-space: nowrap; font-size: 15.800px; }
.st-ok { width: 101px; height: 23px; margin-left: 4px; background: #eeffcc; border: 1px solid #b0b0b0; border-right-color: #fff; border-bottom-color: #fff; display: flex; align-items: center; justify-content: center; }
.desktop { flex: 1; background: linear-gradient(90deg, #1c4a52 0, #155a5a 40%, #125e5c 100%); }
```
